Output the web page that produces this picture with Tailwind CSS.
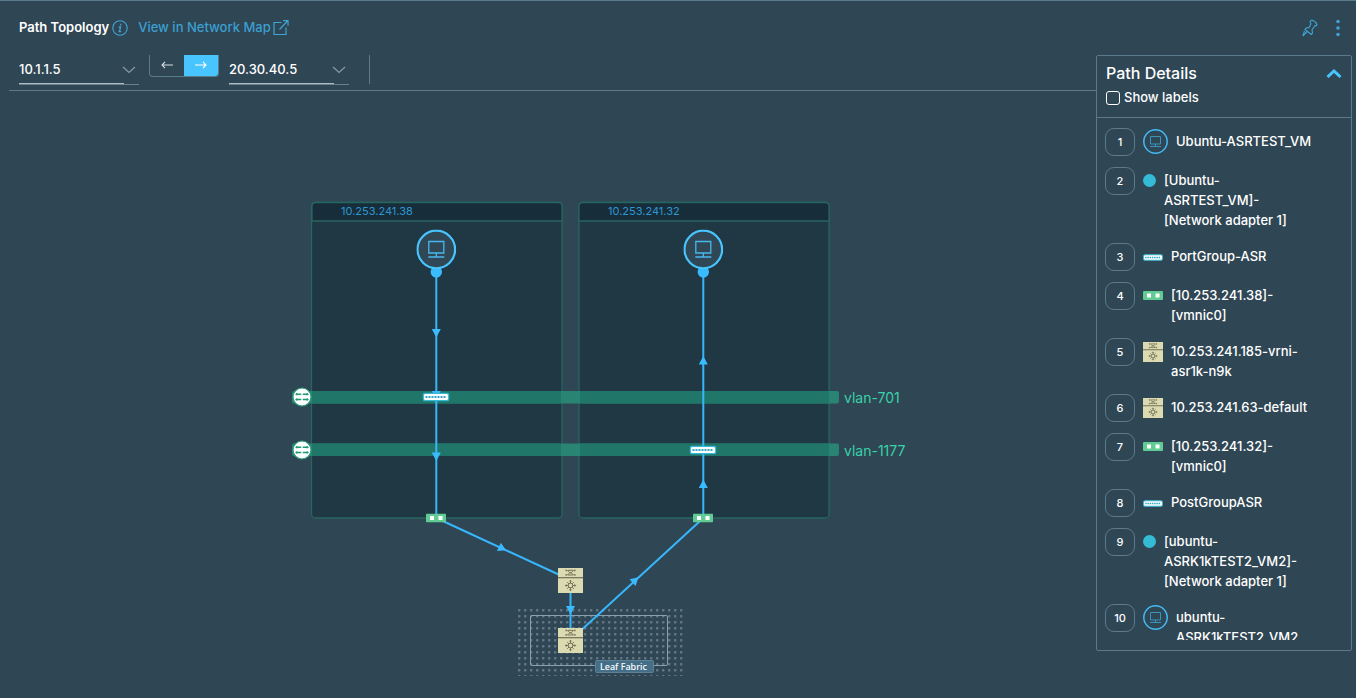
<!DOCTYPE html>
<html lang="en">
<head>
<meta charset="utf-8">
<meta name="viewport" content="width=device-width, initial-scale=1">
<title>Path Topology</title>
<script src="https://cdn.jsdelivr.net/npm/@tailwindcss/browser@4"></script>
</head>
<body class="bg-[#2f4654] font-[Inter,sans-serif] text-[13px] font-medium text-white">
<svg class="hidden" aria-hidden="true">
  <symbol id="vm" viewBox="0 0 40 40">
    <circle cx="20" cy="20" r="18.8" fill="#304755" stroke="#48c4ff" stroke-width="2.2"/>
    <path d="M12.5 12h15v11.500h-15zM20 23.500v4M12 27.500h16" fill="none" stroke="#48b8ee" stroke-width="1.3"/>
  </symbol>
  <symbol id="vm-small" viewBox="0 0 25 25">
    <circle cx="12.500" cy="12.500" r="11.700" fill="none" stroke="#45b9f5" stroke-width="1.500"/>
    <path d="M7.500 7.500h10v7.500h-10zM12.500 15v2.500M7 17.500h11" fill="none" stroke="#3a94bd" stroke-width="1"/>
  </symbol>
  <symbol id="port" viewBox="0 0 27 9">
    <rect x=".7" y=".7" width="25.600" height="7.600" rx="2.200" fill="#fff" stroke="#35b9d6" stroke-width="1.400"/>
    <path d="M3 4.500h21" stroke="#2fa9c6" stroke-width="2" stroke-dasharray="2 1"/>
  </symbol>
  <symbol id="nic" viewBox="0 0 20 9">
    <rect width="20" height="9" rx="1" fill="#60cb92"/>
    <path d="M4 2.500h4v4H4zM12.500 2.500h4v4h-4z" fill="#fff"/>
  </symbol>
  <symbol id="router" viewBox="0 0 25 25">
    <path d="M0 0h25v25H0z" fill="#dcdab1"/>
    <path d="M0 9.700h25" stroke="#6f6e55" stroke-width="1.200"/>
    <g fill="none" stroke="#69694f" stroke-width=".9">
      <path d="M8 2.300c2.500 0 3 2.500 4.500 2.500s2-2.500 4.500-2.500M8 7c2.500 0 3-2.200 4.500-2.200S14.500 7 17 7M10 2.300h5M10 7h5M8 1.500v1.800M17 1.500v1.800M8 6v1.800M17 6v1.800"/>
      <circle cx="12.500" cy="17.500" r="2.300"/>
      <path d="M12.500 12.500v2.700M12.500 19.800v2.700M7.500 17.500h2.700M14.800 17.500h2.700M9.200 14.200l1.700 1.700M14.100 19.100l1.700 1.700M15.800 14.200l-1.700 1.700M10.900 19.100l-1.700 1.700M11.300 13.500l1.200-1.200 1.200 1.200M11.300 21.500l1.200 1.200 1.200-1.200M8.500 16.300l-1.200 1.200 1.200 1.200M16.500 16.300l1.200 1.200-1.200 1.200"/>
    </g>
  </symbol>
  <symbol id="vlan" viewBox="0 0 20 20">
    <circle cx="10" cy="10" r="9" fill="#fff" stroke="#2a9d78" stroke-width="1.200"/>
    <path d="M4 7.300h5.300M10.700 7.300H16M4 12.500h5.300M10.700 12.500H16" stroke="#1f9a74" stroke-width="1.500"/>
    <path d="M5.300 5.800v3L3 7.300zM14.700 5.800v3L17 7.300zM5.300 11v3L3 12.500zM14.700 11v3l2.300-1.500z" fill="#1f9a74"/>
  </symbol>
  <symbol id="chevron" viewBox="0 0 14 8"><path d="M1 1l6 5.500L13 1" fill="none" stroke="#8c999f" stroke-width="1.200"/></symbol>
</svg>

<div class="flex min-h-screen flex-col border-t border-[#5b7a8c]">
  <header class="flex h-[54px] shrink-0 items-center pr-3 pl-[19px]">
    <h1 class="font-semibold">Path Topology</h1>
    <button type="button" aria-label="About path topology" class="ml-[3px]">
      <svg class="size-4" viewBox="0 0 16 16"><circle cx="8" cy="8" r="7.200" fill="none" stroke="#3fa5d4" stroke-width="1.100"/><path d="M8.700 3.800v1.600M6.800 7h1.700l-1 4.600M6.500 11.700h2.600" fill="none" stroke="#3fa5d4" stroke-width="1.300"/></svg>
    </button>
    <a href="#" class="ml-2.5 flex items-center gap-0.5 text-[#3b9fd0]">View in Network Map
      <svg class="size-4" viewBox="0 0 16 16" fill="none" stroke="#3fa5d4" stroke-width="1.200"><path d="M8.500 2.500H1v12h12V7.500M6.500 9.500 14.500 1M10 .7h5V5.700"/></svg>
    </a>
    <button type="button" aria-label="Pin" class="ml-auto">
      <svg class="h-[18px] w-4" viewBox="0 0 16 18" fill="none" stroke="#3fa5d4" stroke-width="1.100" stroke-linejoin="round"><path d="M9.500 1Q13.500 2 15 5.500l-.7 1.300-1.300-.2-3 4.200.5 3.400-1.300 1.300L3 10.500l1-1.500 3-.4 2-3.800-1-2.100zM5.200 12.500.8 17.200M2.500 12l-1.700 5.200"/></svg>
    </button>
    <button type="button" aria-label="More actions" class="ml-3.5 px-1">
      <svg class="h-[18px] w-1" viewBox="0 0 4 18" fill="#3fa5d4"><circle cx="2" cy="2.500" r="1.800"/><circle cx="2" cy="9" r="1.800"/><circle cx="2" cy="15.500" r="1.800"/></svg>
    </button>
  </header>

  <div class="flex flex-1">
    <main class="ml-[9px] flex min-w-0 flex-1 flex-col">
      <div class="flex h-9 shrink-0 items-start border-b border-[#5b7a8c] pl-2.5">
        <div class="relative w-[120px] border-b border-[#6a808d]">
          <select aria-label="Source" class="block h-[29px] w-[105px] appearance-none border-b border-[#b0bcc2] bg-transparent pt-0.5 outline-none"><option>10.1.1.5</option></select>
          <svg class="pointer-events-none absolute top-[11px] right-[3px] h-2 w-3.5"><use href="#chevron"/></svg>
        </div>
        <div class="ml-2.5 flex h-[22px] w-[70px] overflow-hidden rounded-b border border-t-0 border-[#5b7a8c]">
          <button type="button" aria-label="Reverse path" class="flex flex-1 items-center justify-center pb-0.5"><svg class="h-2.5 w-3" viewBox="0 0 12 10" fill="none" stroke="#d5dcdf" stroke-width="1.100"><path d="M12 5H1M4 1.800 1 5l3 3.200"/></svg></button>
          <button type="button" aria-label="Forward path" aria-pressed="true" class="flex flex-1 items-center justify-center bg-[#48c4ff] pb-0.5"><svg class="h-2.5 w-3" viewBox="0 0 12 10" fill="none" stroke="#fff" stroke-width="1.100"><path d="M0 5h11M8 1.800 11 5 8 8.200"/></svg></button>
        </div>
        <div class="relative ml-2.5 w-[120px] border-b border-[#6a808d]">
          <select aria-label="Destination" class="block h-[29px] w-[105px] appearance-none border-b border-[#b0bcc2] bg-transparent pt-0.5 outline-none"><option>20.30.40.5</option></select>
          <svg class="pointer-events-none absolute top-[11px] right-[3px] h-2 w-3.5"><use href="#chevron"/></svg>
        </div>
        <div class="ml-5 h-[29px] w-px bg-[#5b7a8c]"></div>
      </div>

      <svg class="w-full flex-1" viewBox="9 91 1087 607" preserveAspectRatio="xMinYMin meet" role="img" aria-label="Path between 10.1.1.5 and 20.30.40.5">
        <defs>
          <pattern id="dots" x="518" y="609" width="6" height="6" patternUnits="userSpaceOnUse"><rect width="2.400" height="2.400" rx=".6" fill="#637682"/></pattern>
        </defs>
        <g fill="#203843" stroke="#27655f" stroke-width="1.300">
          <rect x="311.500" y="202.500" width="250.500" height="315.500" rx="4"/>
          <rect x="579" y="202.500" width="250" height="315.500" rx="4"/>
          <path fill="#172d3a" d="M312 221v-15q0-3.500 3.500-3.500h243q3.500 0 3.500 3.500v15zM579 221v-15q0-3.500 3.500-3.500h243q3.500 0 3.500 3.500v15z"/>
        </g>
        <g fill="#2a8474"><rect x="292" y="391" width="547" height="12.500" rx="2"/><rect x="292" y="443.500" width="547" height="12.500" rx="2"/></g>
        <path fill="#1f7669" d="M312 391h249v12.500H312zM580 391h249v12.500H580zM312 443.500h249V456H312zM580 443.500h249V456H580z"/>
        <path d="M518 609h166v67H518z" fill="url(#dots)"/>
        <rect x="530.500" y="615.500" width="137" height="50" rx="1.500" fill="none" stroke="#8b9fb1" stroke-width="1"/>
        <path d="M436.300 272v246L570.500 580v60L703.300 518V272" fill="none" stroke="#38b6fb" stroke-width="2"/>
        <g fill="#3abaff">
          <path d="M431.800 329h9l-4.500 8.500zM431.800 391h9l-4.500 8zM431.800 452.500h9l-4.500 8.500zM566 606h9l-4.500 8.500z"/>
          <path d="M698.800 364.500h9l-4.500-8.500zM698.800 488h9l-4.500-8.500z"/>
          <path d="M-4-4.500v9l8-4.500z" transform="translate(502.500 548.500) rotate(25)"/>
          <path d="M-4-4.500v9l8-4.500z" transform="translate(635.500 580) rotate(-42)"/>
          <circle cx="436.300" cy="272" r="5.700"/><circle cx="703.300" cy="272" r="5.700"/>
        </g>
        <use href="#vm" x="416.300" y="229.500" width="40" height="40"/><use href="#vm" x="683.300" y="229.500" width="40" height="40"/>
        <use href="#vlan" x="292" y="387" width="20" height="20"/><use href="#vlan" x="292" y="440" width="20" height="20"/>
        <use href="#port" x="422.500" y="392.500" width="27" height="9"/><use href="#port" x="689.500" y="445.500" width="27" height="9"/>
        <use href="#nic" x="426" y="513.500" width="20" height="9"/><use href="#nic" x="693" y="513.500" width="20" height="9"/>
        <use href="#router" x="558" y="568" width="25" height="25"/><use href="#router" x="558" y="628" width="25" height="25"/>
        <g fill="#2e97d3" font-size="11" font-weight="400"><text x="341" y="215">10.253.241.38</text><text x="608" y="215">10.253.241.32</text></g>
        <g fill="#39d2a8" font-size="14" font-weight="400"><text x="844" y="403">vlan-701</text><text x="844" y="456">vlan-1177</text></g>
        <rect x="595.500" y="660.500" width="58" height="12" rx="1" fill="#456f89" stroke="#5f7f93" stroke-width="1"/>
        <text x="600" y="670" fill="#fff" font-size="9" font-family="Noto Sans, sans-serif">Leaf Fabric</text>
      </svg>
    </main>

    <aside class="mr-1 mb-[47px] flex w-64 shrink-0 flex-col rounded-xs border border-[#5b7a8c]">
      <div class="border-b border-[#5b7a8c] px-[9px] pt-[5px] pb-[11px]">
        <div class="flex items-center justify-between">
          <h2 class="text-base leading-6">Path Details</h2>
          <button type="button" aria-label="Collapse path details"><svg class="h-2.5 w-4" viewBox="0 0 16 10"><path d="M1.500 9 8 3l6.500 6" fill="none" stroke="#48c4ff" stroke-width="3"/></svg></button>
        </div>
        <label class="flex h-[21px] items-center gap-1 pt-1"><input type="checkbox" class="size-3.5 appearance-none rounded-[3px] border border-white checked:bg-[#48c4ff]">Show labels</label>
      </div>
      <div class="relative my-2.5 flex-1 overflow-hidden">
        <ol class="absolute inset-0 flex flex-col gap-[11px] overflow-hidden pr-8 pl-2 leading-5">
          <li class="flex items-start gap-2"><span class="flex h-7 w-[30px] shrink-0 items-center justify-center rounded-[9px] border border-[#5b7a8c] text-[11px]">1</span><svg class="mt-px size-[25px] shrink-0"><use href="#vm-small"/></svg><span class="pt-[3px] pb-0.5 whitespace-nowrap">Ubuntu-ASRTEST_VM</span></li>
          <li class="flex items-start gap-2"><span class="flex h-7 w-[30px] shrink-0 items-center justify-center rounded-[9px] border border-[#5b7a8c] text-[11px]">2</span><span class="mt-[7px] size-[13px] shrink-0 rounded-full bg-[#34bcd6]"></span><span class="pt-[3px] pb-0.5 whitespace-nowrap">[Ubuntu-<br>ASRTEST_VM]-<br>[Network adapter 1]</span></li>
          <li class="flex items-start gap-2"><span class="flex h-7 w-[30px] shrink-0 items-center justify-center rounded-[9px] border border-[#5b7a8c] text-[11px]">3</span><svg class="mt-[11px] h-[7px] w-5 shrink-0"><use href="#port"/></svg><span class="pt-[3px] pb-0.5 whitespace-nowrap">PortGroup-ASR</span></li>
          <li class="flex items-start gap-2"><span class="flex h-7 w-[30px] shrink-0 items-center justify-center rounded-[9px] border border-[#5b7a8c] text-[11px]">4</span><svg class="mt-[9px] h-[9px] w-5 shrink-0"><use href="#nic"/></svg><span class="pt-[3px] pb-0.5 whitespace-nowrap">[10.253.241.38]-<br>[vmnic0]</span></li>
          <li class="flex items-start gap-2"><span class="flex h-7 w-[30px] shrink-0 items-center justify-center rounded-[9px] border border-[#5b7a8c] text-[11px]">5</span><svg class="mt-1 size-5 shrink-0"><use href="#router"/></svg><span class="pt-[3px] pb-0.5 whitespace-nowrap">10.253.241.185-vrni-<br>asr1k-n9k</span></li>
          <li class="flex items-start gap-2"><span class="flex h-7 w-[30px] shrink-0 items-center justify-center rounded-[9px] border border-[#5b7a8c] text-[11px]">6</span><svg class="mt-1 size-5 shrink-0"><use href="#router"/></svg><span class="pt-[3px] pb-0.5 whitespace-nowrap">10.253.241.63-default</span></li>
          <li class="flex items-start gap-2"><span class="flex h-7 w-[30px] shrink-0 items-center justify-center rounded-[9px] border border-[#5b7a8c] text-[11px]">7</span><svg class="mt-[9px] h-[9px] w-5 shrink-0"><use href="#nic"/></svg><span class="pt-[3px] pb-0.5 whitespace-nowrap">[10.253.241.32]-<br>[vmnic0]</span></li>
          <li class="flex items-start gap-2"><span class="flex h-7 w-[30px] shrink-0 items-center justify-center rounded-[9px] border border-[#5b7a8c] text-[11px]">8</span><svg class="mt-[11px] h-[7px] w-5 shrink-0"><use href="#port"/></svg><span class="pt-[3px] pb-0.5 whitespace-nowrap">PostGroupASR</span></li>
          <li class="flex items-start gap-2"><span class="flex h-7 w-[30px] shrink-0 items-center justify-center rounded-[9px] border border-[#5b7a8c] text-[11px]">9</span><span class="mt-[7px] size-[13px] shrink-0 rounded-full bg-[#34bcd6]"></span><span class="pt-[3px] pb-0.5 whitespace-nowrap">[ubuntu-<br>ASRK1kTEST2_VM2]-<br>[Network adapter 1]</span></li>
          <li class="flex items-start gap-2"><span class="flex h-7 w-[30px] shrink-0 items-center justify-center rounded-[9px] border border-[#5b7a8c] text-[11px]">10</span><svg class="mt-px size-[25px] shrink-0"><use href="#vm-small"/></svg><span class="pt-[3px] pb-0.5 whitespace-nowrap">ubuntu-<br>ASRK1kTEST2_VM2</span></li>
        </ol>
      </div>
    </aside>
  </div>
</div>
</body>
</html>
